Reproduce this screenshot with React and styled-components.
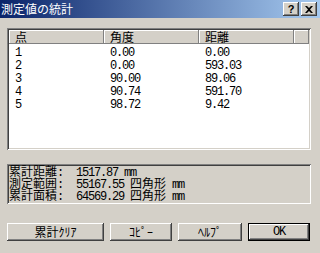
import React from "react";
import styled, { createGlobalStyle } from "styled-components";

const rows = [
  ["1", "0.00", "0.00"],
  ["2", "0.00", "593.03"],
  ["3", "90.00", "89.06"],
  ["4", "90.74", "591.70"],
  ["5", "98.72", "9.42"],
];

const App = () => {
  return (
    <Window>
      <GlobalStyle />
      <TitleBar>
        <Title>測定値の統計</Title>
        <CaptionButtons>
          <CaptionButton>?</CaptionButton>
          <CaptionButton>
            <svg width="8" height="7" viewBox="0 0 8 7">
              <path
                d="M0 0h2l2 2 2-2h2L5 3.5 8 7H6L4 5 2 7H0l3-3.5z"
                fill="#000"
              />
            </svg>
          </CaptionButton>
        </CaptionButtons>
      </TitleBar>
      <Body>
        <ListView>
          <Header>
            <HeaderCell>点</HeaderCell>
            <HeaderCell>角度</HeaderCell>
            <HeaderCell>距離</HeaderCell>
            <HeaderCell />
          </Header>
          {rows.map((r) => (
            <Row key={r[0]}>
              <Cell>
                <Num>{r[0]}</Num>
              </Cell>
              <Cell>
                <Num>{r[1]}</Num>
              </Cell>
              <Cell>
                <Num>{r[2]}</Num>
              </Cell>
              <Cell />
            </Row>
          ))}
        </ListView>
        <Summary>
          <Line>
            <Label>
              累計距離<Num>:</Num>
            </Label>
            <span>
              <Num>1517.87 mm</Num>
            </span>
          </Line>
          <Line>
            <Label>
              測定範囲<Num>:</Num>
            </Label>
            <span>
              <Num>55167.55 </Num>四角形<Num> mm</Num>
            </span>
          </Line>
          <Line>
            <Label>
              累計面積<Num>:</Num>
            </Label>
            <span>
              <Num>64569.29 </Num>四角形<Num> mm</Num>
            </span>
          </Line>
        </Summary>
        <Buttons>
          <Button $width={97}>累計ｸﾘｱ</Button>
          <Button $width={62}>ｺﾋﾟｰ</Button>
          <Button $width={64}>ﾍﾙﾌﾟ</Button>
          <Button $width={62} $default>
            <Num>OK</Num>
          </Button>
        </Buttons>
      </Body>
    </Window>
  );
};

export default App;

const GlobalStyle = createGlobalStyle`
  body {
    margin: 0;
    background: #d4d0c8;
  }
`;

const raised = `
  box-shadow: inset -1px -1px #404040, inset 1px 1px #ffffff,
    inset -2px -2px #808080, inset 2px 2px #d4d0c8;
`;

const sunken = `
  box-shadow: inset 1px 1px #808080, inset -1px -1px #ffffff,
    inset 2px 2px #404040, inset -2px -2px #d4d0c8;
`;

const Window = styled.div`
  width: 320px;
  height: 253px;
  background: #d4d0c8;
  display: flex;
  flex-direction: column;
  overflow: hidden;
  font-family: "Noto Sans CJK JP", sans-serif;
  font-size: 12px;
  color: #000;
`;

const TitleBar = styled.div`
  height: 18px;
  box-sizing: border-box;
  padding: 0 3px 0 1px;
  background: linear-gradient(to right, #0a246a, #a6caf0);
  display: flex;
  align-items: center;
  justify-content: space-between;
`;

const Title = styled.span`
  color: #fff;
  font-size: 12px;
  line-height: 18px;
`;

const CaptionButtons = styled.div`
  display: flex;
  gap: 2px;
`;

const CaptionButton = styled.div`
  width: 16px;
  height: 14px;
  box-sizing: border-box;
  background: #d4d0c8;
  ${raised}
  display: flex;
  align-items: center;
  justify-content: center;
  font-family: "Liberation Sans", sans-serif;
  font-weight: bold;
  font-size: 11px;
  line-height: 14px;
`;

const Body = styled.div`
  flex: 1;
  display: flex;
  flex-direction: column;
  padding: 10px 9px 0 7px;
`;

const ListView = styled.div`
  height: 122px;
  box-sizing: border-box;
  padding: 2px;
  background: #fff;
  ${sunken}
`;

const Header = styled.div`
  display: grid;
  grid-template-columns: 95px 95px 95px 1fr;
  height: 14px;
`;

const HeaderCell = styled.div`
  background: #d4d0c8;
  box-shadow: inset -1px -1px #808080, inset 1px 1px #ffffff;
  line-height: 14px;
  padding-left: 6px;
`;

const Row = styled.div`
  display: grid;
  grid-template-columns: 95px 95px 95px 1fr;
  height: 13px;
  line-height: 13px;
`;

const Cell = styled.div`
  padding-left: 6px;
  white-space: pre;
`;

const Num = styled.span`
  font-family: "Liberation Mono", monospace;
  letter-spacing: -1.2px;
  white-space: pre;
`;

const Summary = styled.div`
  margin-top: 14px;
  height: 40px;
  box-sizing: border-box;
  padding: 1px 2px 0;
  ${sunken}
`;

const Line = styled.div`
  display: grid;
  grid-template-columns: 67px 1fr;
  height: 12px;
  line-height: 12px;
  white-space: pre;
`;

const Label = styled.span`
  white-space: pre;
`;

const Buttons = styled.div`
  display: flex;
  gap: 6px;
  margin-top: 19px;
`;

const Button = styled.div`
  width: ${(p) => p.$width}px;
  height: 18px;
  box-sizing: border-box;
  background: #d4d0c8;
  display: flex;
  align-items: center;
  justify-content: center;
  line-height: 14px;
  ${(p) =>
    p.$default
      ? `box-shadow: inset 0 0 0 1px #000, inset -2px -2px #404040,
          inset 2px 2px #ffffff, inset -3px -3px #808080;`
      : raised}
`;
